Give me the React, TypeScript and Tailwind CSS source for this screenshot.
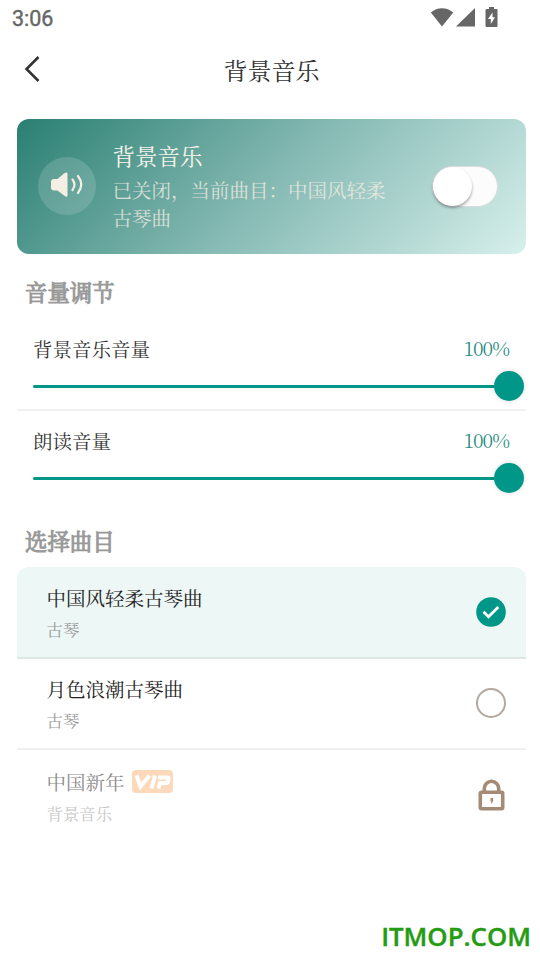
import React, { ReactNode } from 'react';

interface Track {
  title: string;
  category: string;
  state: 'selected' | 'available' | 'locked';
}

const tracks: Track[] = [
  { title: '中国风轻柔古琴曲', category: '古琴', state: 'selected' },
  { title: '月色浪潮古琴曲', category: '古琴', state: 'available' },
  { title: '中国新年', category: '背景音乐', state: 'locked' },
];

const rowStyles = {
  selected: 'rounded-t-[12px] bg-[#edf7f6] border-b-2 border-[#dde8e5]',
  available: 'border-b-2 border-[#f2f0ef]',
  locked: '',
};

function StatusBar() {
  return (
    <div className="flex h-9 items-center justify-between pl-3 pr-[41px] text-[#666]">
      <span className="pt-[2px] font-[Roboto] text-[21.5px] leading-none [-webkit-text-stroke:0.4px_#666]">3:06</span>
      <div className="flex items-center">
        <svg width="24" height="20" viewBox="0 0 24 20" fill="currentColor">
          <path d="M0.8 4.6C7 -1.2 17 -1.2 23.2 4.6L12 18.6Z" />
        </svg>
        <svg className="ml-[2px]" width="20" height="20" viewBox="0 0 20 20" fill="currentColor">
          <path d="M19 0V18.600H0Z" />
        </svg>
        <svg className="-mt-px ml-[9px] mr-px" width="13" height="21" viewBox="0 0 13 21" fill="currentColor">
          <path d="M4 0h5v2h2.5q1 0 1 1V19q0 1-1 1H1.5q-1 0-1-1V3q0-1 1-1H4z" />
          <path d="M7.5 5.5L3 12h2.8v5L10 10.2H7.5z" fill="#fff" />
        </svg>
      </div>
    </div>
  );
}

function SectionTitle({ children }: { children: ReactNode }) {
  return (
    <h2 className="pl-[25px] text-[22.4px] leading-[30px] text-[#999] [-webkit-text-stroke:1px_#999]">
      {children}
    </h2>
  );
}

function VolumeRow({ label }: { label: string }) {
  return (
    <div className="px-4">
      <div className="flex items-start justify-between text-[19.5px] leading-[28px]">
        <span className="text-[#333]">{label}</span>
        <span className="-mt-px pr-px font-light tracking-[-1px] text-[#17897b]">100%</span>
      </div>
      <div className="-mr-[14px] mt-[8px] flex h-[30px] items-center">
        <div className="h-[3px] flex-1 rounded-l-full bg-[#009688]" />
        <div className="size-[30px] rounded-full bg-[#009688] shadow-[0_0_5px_rgba(0,0,0,0.14)]" />
      </div>
    </div>
  );
}

function VipBadge() {
  return (
    <span className="-ml-px flex h-[23px] w-[41px] items-center justify-center rounded-[4px] bg-[#fdd9bb]">
      <svg width="37" height="16" viewBox="0 0 37 16" fill="none" stroke="#fff" strokeWidth="4">
        <path d="M2.500 1.500L6.500 12.500L15.500 1.500" />
        <path d="M21 1.500L17.500 14.500" />
        <path d="M24 3.500H33.500Q35 3.500 34.500 5L34 7.500Q33.500 9 32 9H26L24.500 14.500" />
      </svg>
    </span>
  );
}

function TrackIcon({ state }: { state: Track['state'] }) {
  if (state === 'selected') {
    return (
      <svg width="30" height="30" viewBox="0 0 30 30" fill="none">
        <circle cx="15" cy="15" r="14.8" fill="#009688" />
        <path d="M7.500 14.800L12.500 19.700L22.300 9.900" stroke="#fff" strokeWidth="2.800" />
      </svg>
    );
  }
  if (state === 'available') {
    return <span className="size-[30px] rounded-full border-[2.5px] border-[#b3a89d]" />;
  }
  return (
    <svg className="-mt-[2px]" width="30" height="32" viewBox="0 0 30 32" fill="none" stroke="#a58b75" strokeWidth="3.6">
      <rect x="4.3" y="13.3" width="22.4" height="16.4" rx="1.2" />
      <path d="M8.3 13V9.500a7.200 7.200 0 0 1 14.400 0V13" />
      <path d="M14.500 19h2.600v3.200l-1.400 2.400h-.8l.5-2.400h-.9z" fill="#a58b75" stroke="none" />
    </svg>
  );
}

function TrackRow({ track }: { track: Track }) {
  const locked = track.state === 'locked';

  return (
    <div className={`flex h-[91.5px] items-center justify-between pl-[29.5px] pr-5 ${rowStyles[track.state]}`}>
      <div className="pt-[2px]">
        <div className="flex items-center gap-2">
          <span className={`text-[19.5px] leading-[30px] ${locked ? 'text-[#8b8b8b]' : 'text-[#222]'}`}>
            {track.title}
          </span>
          {locked && <VipBadge />}
        </div>
        <p className={`mt-[2px] text-[16.4px] leading-[28px] ${locked ? 'text-[#c8c8c8]' : 'text-[#999]'}`}>
          {track.category}
        </p>
      </div>
      <TrackIcon state={track.state} />
    </div>
  );
}

export default function App() {
  return (
    <div className="flex h-[960px] w-[540px] flex-col overflow-hidden bg-white font-['Noto_Serif_CJK_SC','Liberation_Serif','Noto_Sans_CJK_SC',serif]">
      <StatusBar />

      <header className="grid h-[67px] grid-cols-[1fr_auto_1fr] items-center text-[#333]">
        <svg className="-mt-[2px] ml-[23px]" width="18" height="28" viewBox="0 0 18 28" fill="none">
          <path d="M15.500 2L3.500 14L15.500 26" stroke="#333" strokeWidth="2.6" />
        </svg>
        <h1 className="pl-[3px] text-[24px] leading-8">背景音乐</h1>
      </header>

      <main className="px-[17px] pr-[14px] pt-4">
        <section className="flex h-[135px] items-center rounded-[12px] bg-[linear-gradient(135deg,#2a7f72_0%,#86bab4_50%,#d7f0ec_100%)] pl-[21px] pr-7">
          <div className="-mt-[2px] flex size-[58px] items-center justify-center rounded-full bg-white/15">
            <svg className="-mt-[2px]" width="34" height="26" viewBox="0 0 34 26" fill="none">
              <path d="M1 10Q1 7 4 7H7.500L14 1.500Q17.500-.5 17.500 2V23.500Q17.500 26 14 23.500L7.500 18.500H4Q1 18.500 1 15.500Z" fill="#f5eee2" />
              <path d="M22.500 7.500Q26.500 12.500 22.500 18M28 4Q34.500 12.500 28 21" stroke="#f5eee2" strokeWidth="2.200" strokeLinecap="round" />
            </svg>
          </div>
          <div className="ml-[16.500px] w-[280px] pb-[3px]">
            <p className="text-[22.5px] leading-8 text-[#f8f4ea]">背景音乐</p>
            <p className="mt-[5px] text-[19.5px] leading-[28px] text-[#f5eee2]/80">已关闭，当前曲目：中国风轻柔古琴曲</p>
          </div>
          <div className="ml-auto h-[41px] w-[66px] rounded-full border-[1.5px] border-[#dcdcdc] bg-[#fcfcfc]">
            <div className="size-[39px] rounded-full bg-white shadow-[0_2px_3px_rgba(0,0,0,0.35)]" />
          </div>
        </section>
      </main>

      <div className="mt-[22px]">
        <SectionTitle>音量调节</SectionTitle>
      </div>
      <section className="ml-[17px] mr-[14px] mt-[29px]">
        <VolumeRow label="背景音乐音量" />
        <div className="mb-[16px] mt-[8px] h-[2px] bg-[#f1f1f1]" />
        <VolumeRow label="朗读音量" />
      </section>

      <div className="mt-[32px]">
        <SectionTitle>选择曲目</SectionTitle>
      </div>
      <section className="ml-[17px] mr-[14px] mt-[12px]">
        {tracks.map((track) => (
          <TrackRow key={track.title} track={track} />
        ))}
      </section>

      <footer className="mt-auto pb-[7px] pr-[9px] text-right font-['Open_Sans'] text-[25.8px] font-semibold leading-[34px] text-[#259b13] [-webkit-text-stroke:0.4px_#259b13]">
        ITMOP.COM
      </footer>
    </div>
  );
}
